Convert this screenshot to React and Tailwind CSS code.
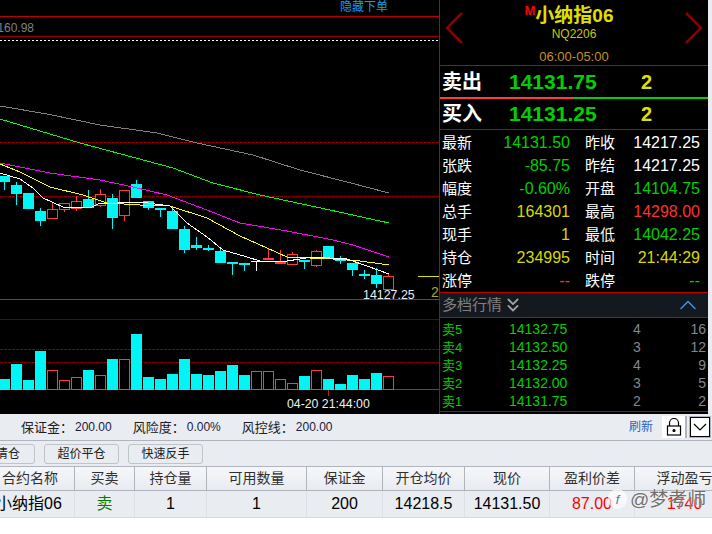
import React from "react";
import { ChevronUp, ChevronsDown } from "lucide-react";

const FONT = "font-['Liberation_Sans','Noto_Sans_CJK_SC',sans-serif]";

// x, wick top, body top, body bottom, wick bottom, up?
const candles = [
  [4, 176, 176, 182, 190, 0], [16, 182, 185, 194, 205, 0], [28, 193, 193, 209, 209, 0],
  [40, 208, 211, 221, 226, 0], [52, 203, 209, 218, 219, 1], [64, 203, 203, 209, 212, 1],
  [76, 196, 201, 208, 211, 1], [88, 190, 199, 208, 208, 0], [100, 189, 194, 205, 207, 1],
  [112, 194, 198, 218, 229, 0], [124, 190, 190, 215, 221, 1], [136, 180, 184, 198, 198, 0],
  [148, 201, 201, 208, 210, 0], [160, 208, 208, 210, 217, 0], [172, 207, 211, 229, 229, 0],
  [184, 226, 229, 250, 253, 0], [196, 237, 245, 248, 250, 0], [208, 245, 248, 250, 251, 0],
  [220, 248, 251, 263, 263, 0], [232, 262, 262, 263, 275, 0], [244, 263, 263, 265, 271, 0],
  [268, 248, 258, 260, 260, 2], [280, 250, 262, 263, 264, 2], [292, 252, 254, 264, 264, 1],
  [304, 260, 260, 261, 269, 0], [316, 250, 251, 265, 267, 1], [328, 246, 246, 259, 259, 0],
  [340, 256, 259, 260, 264, 0], [352, 263, 263, 270, 276, 0], [364, 270, 274, 276, 279, 0],
  [376, 268, 275, 284, 288, 0], [388, 274, 276, 289, 289, 1],
];

const volumes = [
  [4, 379, 0], [16, 364, 0], [28, 380, 0], [40, 351, 0], [52, 370, 1], [64, 380, 1], [76, 377, 1],
  [88, 370, 0], [100, 375, 1], [112, 359, 0], [124, 359, 1], [136, 334, 0], [148, 377, 0], [160, 379, 0],
  [172, 374, 0], [184, 359, 0], [196, 374, 0], [208, 375, 0], [220, 371, 0], [232, 365, 0], [244, 375, 0],
  [256, 371, 1], [268, 371, 1], [280, 379, 1], [292, 383, 1], [304, 376, 0], [316, 370, 1], [328, 379, 0],
  [340, 384, 0], [352, 375, 0], [364, 379, 0], [376, 373, 0], [388, 376, 1],
];

const maLines = [
  ["#808080", "0,106 47,114 100,125 157,133 197,143 253,155 300,170 347,182 389,193"],
  ["#00ff00", "0,119 40,131 80,143 147,161 173,168 213,183 260,195 330,210 389,223"],
  ["#ff00ff", "0,163 50,173 100,180 133,187 167,195 207,210 240,223 287,231 333,240 353,245 389,257"],
  ["#ffff00", "0,164 20,172 50,187 83,195 107,203 140,205 170,206 207,218 240,236 267,248 287,257 333,259 360,261 389,265"],
  ["#ffffff", "0,173 20,179 33,188 43,198 63,207 90,208 100,203 117,203 140,202 170,206 187,223 207,237 223,250 247,257 260,261 287,261 313,257 347,259 367,266 389,274"],
];

const stats = [
  ["最新", "14131.50", "text-[#00d000]", "昨收", "14217.25", "text-white"],
  ["张跌", "-85.75", "text-[#00d000]", "昨结", "14217.25", "text-white"],
  ["幅度", "-0.60%", "text-[#00d000]", "开盘", "14104.75", "text-[#00d000]"],
  ["总手", "164301", "text-[#d8d800]", "最高", "14298.00", "text-[#ff3030]"],
  ["现手", "1", "text-[#d8d800]", "最低", "14042.25", "text-[#00d000]"],
  ["持仓", "234995", "text-[#d8d800]", "时间", "21:44:29", "text-[#d8d800]"],
  ["涨停", "--", "text-[#ff3030]", "跌停", "--", "text-[#00d000]"],
];

const depth = [
  ["卖5", "14132.75", "4", "16"],
  ["卖4", "14132.50", "3", "12"],
  ["卖3", "14132.25", "4", "9"],
  ["卖2", "14132.00", "3", "5"],
  ["卖1", "14131.75", "2", "2"],
];

const columns = [
  { label: "合约名称", width: "w-[75px]", value: "小纳指06", color: "text-black -ml-[4px]", head: "justify-start pl-[2px]", cell: "justify-start" },
  { label: "买卖", width: "w-[60px]", value: "卖", color: "text-[#008000]" },
  { label: "持仓量", width: "w-[72px]", value: "1", color: "text-black" },
  { label: "可用数量", width: "w-[100px]", value: "1", color: "text-black" },
  { label: "保证金", width: "w-[76px]", value: "200", color: "text-black" },
  { label: "开仓均价", width: "w-[82px]", value: "14218.5", color: "text-black" },
  { label: "现价", width: "w-[85px]", value: "14131.50", color: "text-black" },
  { label: "盈利价差", width: "w-[85px]", value: "87.00", color: "text-[#ff0000]" },
  { label: "浮动盈亏", width: "w-[100px]", value: "1740", color: "text-[#ff0000]" },
];

function Chart() {
  return (
    <svg width="439" height="414" viewBox="0 0 439 414" className="block">
      <line x1="0" x2="439" y1="16.5" y2="16.5" stroke="#c00000" />
      <line x1="0" x2="439" y1="36.5" y2="36.5" stroke="#900000" />
      <line x1="0" x2="439" y1="40.5" y2="40.5" stroke="#ffffff" strokeDasharray="2 2" />
      <line x1="0" x2="439" y1="142.5" y2="142.5" stroke="#900000" strokeDasharray="3 1" />
      <line x1="0" x2="439" y1="196.5" y2="196.5" stroke="#900000" strokeDasharray="3 1" />
      <line x1="0" x2="439" y1="299.5" y2="299.5" stroke="#c02020" />
      <line x1="0" x2="439" y1="319.5" y2="319.5" stroke="#700000" />
      <line x1="0" x2="439" y1="349.5" y2="349.5" stroke="#800000" strokeDasharray="3 1" />
      <line x1="0" x2="439" y1="362.5" y2="362.5" stroke="#800000" strokeDasharray="3 1" />
      <line x1="0" x2="439" y1="389.5" y2="389.5" stroke="#c02020" />
      <line x1="328.5" x2="328.5" y1="390" y2="396" stroke="#c02020" />
      <line x1="418" x2="439" y1="276.5" y2="276.5" stroke="#e0e000" />

      {candles.map(([x, wt, bt, bb, wb, kind]) => {
        const color = kind ? "#ff3c3c" : "#00f5f5";
        return (
          <g key={x}>
            <line x1={x + 0.5} x2={x + 0.5} y1={wt} y2={bt} stroke={color} />
            <line x1={x + 0.5} x2={x + 0.5} y1={bb} y2={wb} stroke={color} />
            {kind === 1 ? (
              <rect x={x - 4.5} y={bt + 0.5} width="10" height={bb - bt} fill="#000" stroke={color} />
            ) : (
              <rect x={x - 5} y={bt} width="11" height={Math.max(bb - bt, 2)} fill={color} />
            )}
          </g>
        );
      })}
      {/* white doji */}
      <line x1="251" x2="262" y1="261.5" y2="261.5" stroke="#fff" />
      <line x1="256.5" x2="256.5" y1="261" y2="271" stroke="#fff" />

      {maLines.map(([color, points]) => (
        <polyline key={color} points={points} fill="none" stroke={color} strokeWidth="1" shapeRendering="crispEdges" />
      ))}

      {volumes.map(([x, top, up]) =>
        up ? (
          <rect key={x} x={x - 4.5} y={top + 0.5} width="10" height={389 - top} fill="#000" stroke="#ff3c3c" />
        ) : (
          <rect key={x} x={x - 5} y={top} width="11" height={390 - top} fill="#00f5f5" />
        ),
      )}

      <text x="34" y="32" textAnchor="end" fontSize="12" fill="#808080">160.98</text>
      <text x="363" y="299" fontSize="12.4" fill="#e8f0f8">14127.25</text>
      <text x="431" y="297" fontSize="14" fill="#a8a820">2</text>
      <text x="287" y="408" fontSize="12.3" fill="#f0f0f0">04-20 21:44:00</text>
    </svg>
  );
}

function Arrow({ points, className }) {
  return (
    <svg width="18" height="32" viewBox="0 0 18 32" className={className}>
      <polyline points={points} fill="none" stroke="#8b0000" strokeWidth="2.5" />
    </svg>
  );
}

function QuotePanel() {
  return (
    <div className="w-[268px] shrink-0 bg-black">
      <div className="relative flex h-[65px] flex-col items-center">
        <Arrow points="17,1 2,16 17,31" className="absolute left-[5px] top-[12px]" />
        <Arrow points="1,1 16,16 1,31" className="absolute left-[245px] top-[12px]" />
        <div className="mt-[3px] flex h-[24px] items-center pr-[10px] text-[19px] font-bold leading-none text-[#e0e000]">
          <span className="mb-[9px] text-[13px] text-[#ff0000]">M</span>
          <span>小纳指06</span>
        </div>
        <div className="text-[12px] leading-[14px] text-[#c8c800]">NQ2206</div>
        <div className="mt-[9px] text-[13px] leading-[14px] text-[#c09020]">06:00-05:00</div>
      </div>
      <div className="h-px bg-[#a01010]" />
      <div className="flex h-[31px] items-center font-bold">
        <span className="ml-[2px] w-[67px] text-[20px] text-white">卖出</span>
        <span className="w-[132px] text-[21px] text-[#00d000]">14131.75</span>
        <span className="text-[20px] text-[#e0e000]">2</span>
      </div>
      <div className="flex h-[2px]">
        <div className="w-[133px] bg-[#ff3c3c]" />
        <div className="flex-1 bg-[#00d000]" />
      </div>
      <div className="flex h-[30px] items-center font-bold">
        <span className="ml-[2px] w-[67px] text-[20px] text-white">买入</span>
        <span className="w-[132px] text-[21px] text-[#00d000]">14131.25</span>
        <span className="text-[20px] text-[#e0e000]">2</span>
      </div>
      <div className="h-px bg-[#a01010]" />
      <div className="mt-px">
        {stats.map(([l1, v1, c1, l2, v2, c2]) => (
          <div key={l1} className="flex h-[23px] items-center text-[15px] leading-none text-white">
            <div className="flex w-[130px] justify-between pl-[2px]">
              <span>{l1}</span>
              <span className={`text-[16px] ${c1}`}>{v1}</span>
            </div>
            <div className="ml-[15px] flex w-[115px] justify-between">
              <span>{l2}</span>
              <span className={`text-[16px] ${c2}`}>{v2}</span>
            </div>
          </div>
        ))}
      </div>
      <div className="h-px bg-[#c00000]" />
      <div className="flex h-[24px] items-center bg-[#14181f] pl-[2px] pr-[6px] text-[15px] text-[#808080]">
        <span>多档行情</span>
        <ChevronsDown className="h-[22px] w-[22px] text-[#a0a0a0]" strokeWidth={2} />
        <ChevronUp className="ml-auto h-[28px] w-[28px] text-[#3f8fef]" strokeWidth={1.3} />
      </div>
      <div className="h-px bg-[#a01010]" />
      <div className="pt-[2px]">
        {depth.map(([name, price, qty, total]) => (
          <div key={name} className="flex h-[18px] items-center text-[14px] leading-none">
            <span className="w-[69px] pl-[2px] text-[13px] text-[#00d000]">{name}</span>
            <span className="w-[124px] text-[#00d000]">{price}</span>
            <span className="w-[32px] text-[#808890]">{qty}</span>
            <span className="w-[41px] text-right text-[#808890]">{total}</span>
          </div>
        ))}
      </div>
      <div className="mt-px h-px bg-[#c00000]" />
      <div className="h-[2px]" />
    </div>
  );
}

export default function App() {
  return (
    <div className={`h-[534px] w-[712px] overflow-hidden bg-white ${FONT}`}>
      <div className="flex h-[414px] bg-[#e9ecf1]">
        <div className="relative w-[439px] shrink-0 bg-black">
          <Chart />
          <span className="absolute left-[340px] top-0 text-[12px] leading-[14px] text-[#1a9be0]">隐藏下单</span>
        </div>
        <div className="h-full w-px bg-[#a01010]" />
        <QuotePanel />
      </div>

      <div className="flex h-[26px] items-center bg-[#e9ecf1] pl-[21px] pr-px text-[13px] leading-none text-[#202020]">
        <span>保证金：</span><span className="ml-[2px] text-[12px] text-[#1a1a40]">200.00</span>
        <span className="ml-[21px]">风险度：</span><span className="ml-[2px] text-[12px] text-[#1a1a40]">0.00%</span>
        <span className="ml-[21px]">风控线：</span><span className="ml-[2px] text-[12px] text-[#1a1a40]">200.00</span>
        <span className="ml-auto text-[12px] text-[#3060c0]">刷新</span>
        <span className="ml-[9px] flex h-[22px] w-[25px] items-center justify-center border-r-2 border-[#b0b5bd] bg-white">
          <svg width="16" height="18" viewBox="0 0 16 18" fill="none" stroke="#000" strokeWidth="1.2">
            <path d="M3.5 8V5a4.5 4.5 0 0 1 9 0v3" />
            <rect x="1.5" y="8" width="13" height="9" />
            <circle cx="8" cy="12.5" r="1" fill="#000" />
          </svg>
        </span>
        <span className="ml-[2px] flex h-[22px] w-[22px] items-center justify-center border border-[#b0b5bd] bg-white">
          <span className="flex h-[20px] w-[20px] items-center justify-center border border-black">
            <svg width="14" height="8" viewBox="0 0 14 8" fill="none" stroke="#000" strokeWidth="1.2">
              <polyline points="1,1 7,7 13,1" />
            </svg>
          </span>
        </span>
      </div>

      <div className="flex h-[26px] items-center gap-[9px] border-t border-[#b0b5bd] bg-[#e9ecf1] text-[12px] text-[#202020]">
        <button type="button" className="-ml-[12px] h-[20px] w-[47px] rounded-[3px] border border-[#c0c4c8] pl-[7px] text-left leading-none">清仓</button>
        <button type="button" className="h-[20px] w-[75px] rounded-[3px] border border-[#c0c4c8] leading-none">超价平仓</button>
        <button type="button" className="h-[20px] w-[75px] rounded-[3px] border border-[#c0c4c8] leading-none">快速反手</button>
      </div>

      <div className="flex h-[25px] border-y border-[#b0b5bd] bg-gradient-to-b from-[#f6f7fb] to-[#e8ebf0] text-[14px] text-[#303030]">
        {columns.map((col) => (
          <div key={col.label} className={`flex shrink-0 items-center border-r border-[#b0b5bd] ${col.width} ${col.head || "justify-center"}`}>{col.label}</div>
        ))}
      </div>

      <div className="relative flex h-[27px] border-b border-[#d8d8d8] bg-[#e9ecf1] text-[16px]">
        {columns.map((col) => (
          <div key={col.label} className={`flex shrink-0 items-center border-r border-[#dcdfe4] ${col.width} ${col.cell || "justify-center"}`}>
            <span className={`${col.color} whitespace-nowrap`}>{col.value}</span>
          </div>
        ))}
        <div className="absolute left-[608px] top-[-2px] flex items-center text-[19px] leading-none text-[#707070] [text-shadow:0_0_2px_#fff]">
          <span className="mr-[3px] flex h-[20px] w-[19px] items-center justify-center rounded-full bg-white/70 text-[13px] italic">f</span>
          <span>@梦考师</span>
        </div>
      </div>
    </div>
  );
}
